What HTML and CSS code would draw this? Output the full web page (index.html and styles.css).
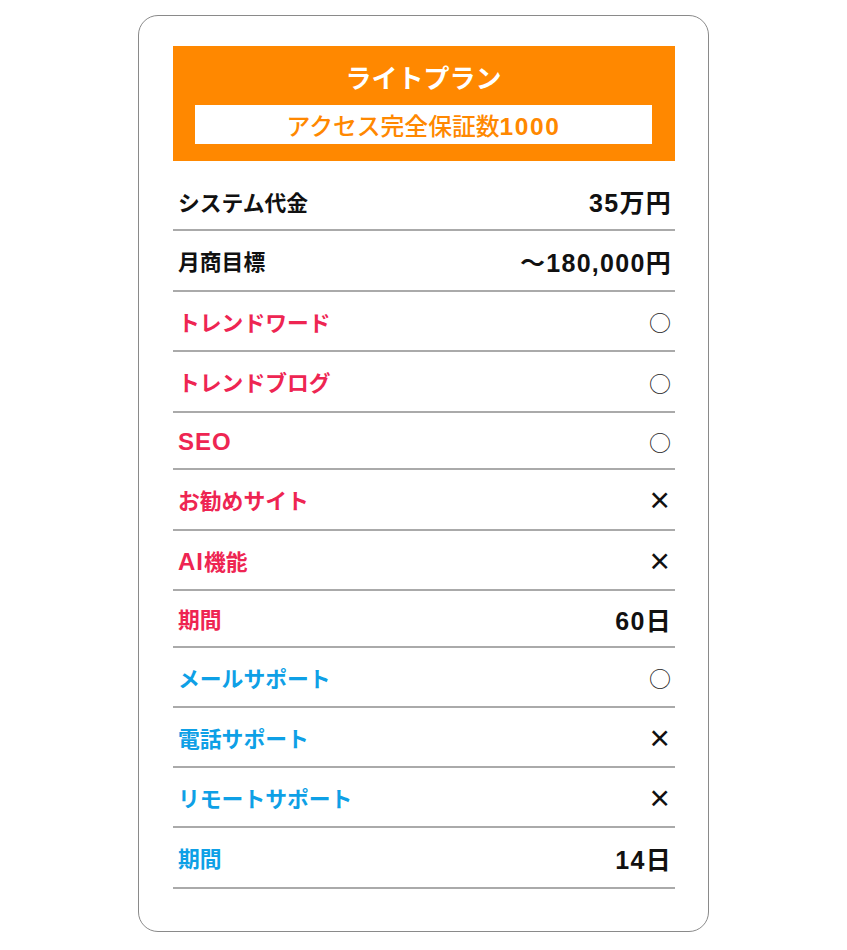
FILE: index.html
```html
<!DOCTYPE html>
<html lang="ja">
<head>
<meta charset="utf-8">
<title>ライトプラン</title>
<link rel="stylesheet" href="styles.css">
</head>
<body>
<div class="card">
  <div class="plan-head">
    <div class="plan-title">ライトプラン</div>
    <div class="plan-sub">アクセス完全保証数<span class="sub-num">1000</span></div>
  </div>
  <div class="rows">
    <div class="row r70 first"><span class="label dark">システム代金</span><span class="value">35万円</span></div>
    <div class="row r61"><span class="label dark">月商目標</span><span class="value">〜180,000円</span></div>
    <div class="row r60"><span class="label red">トレンドワード</span><span class="value mark">○</span></div>
    <div class="row r61"><span class="label red">トレンドブログ</span><span class="value mark">○</span></div>
    <div class="row r57"><span class="label red"><span class="lat">SEO</span></span><span class="value mark">○</span></div>
    <div class="row r61"><span class="label red">お勧めサイト</span><span class="value cross">×</span></div>
    <div class="row r60"><span class="label red"><span class="lat">AI</span>機能</span><span class="value cross">×</span></div>
    <div class="row r57"><span class="label red">期間</span><span class="value">60日</span></div>
    <div class="row r60"><span class="label blue">メールサポート</span><span class="value mark">○</span></div>
    <div class="row r60"><span class="label blue">電話サポート</span><span class="value cross">×</span></div>
    <div class="row r60"><span class="label blue">リモートサポート</span><span class="value cross">×</span></div>
    <div class="row r61"><span class="label blue">期間</span><span class="value">14日</span></div>
  </div>
</div>
</body>
</html>
```

FILE: styles.css
```css
* { box-sizing: border-box; }
html, body { margin: 0; padding: 0; background: #fff; }
body {
  font-family: "Liberation Sans", "Noto Sans CJK JP", sans-serif;
  color: #111;
}
.card {
  margin: 15px 0 0 138px;
  width: 571px;
  height: 917px;
  border: 1px solid #8a8a8a;
  border-radius: 20px;
  padding: 30px 33px 0 34px;
}
.plan-head {
  background: #ff8800;
  height: 115px;
  padding: 12px 23px 0 22px;
  display: flex;
  flex-direction: column;
  align-items: stretch;
}
.plan-title {
  color: #fff;
  font-family: "Noto Sans CJK JP", sans-serif;
  font-weight: 700;
  font-size: 26px;
  line-height: 38px;
  text-align: center;
  height: 47px;
}
.plan-sub {
  background: #fff;
  color: #ff8800;
  font-family: "Noto Sans CJK JP", sans-serif;
  font-weight: 500;
  font-size: 23.8px;
  height: 39px;
  line-height: 39px;
  text-align: center;
}
.sub-num {
  font-family: "Liberation Sans", sans-serif;
  font-weight: 700;
  font-size: 24.5px;
  letter-spacing: 1.6px;
}
.rows { display: flex; flex-direction: column; }
.row {
  display: flex;
  justify-content: space-between;
  align-items: center;
  border-bottom: 2px solid #aaaaaa;
  padding: 0 4px 0 5px;
}
.r70 { height: 70px; }
.r61 { height: 61px; }
.r60 { height: 60px; }
.r57 { height: 57px; }
.first { padding-top: 12px; }
.label {
  font-family: "Noto Sans CJK JP", sans-serif;
  font-size: 21.8px;
  font-weight: 700;
}
.lat {
  font-family: "Liberation Sans", sans-serif;
  font-size: 24px;
  letter-spacing: 1px;
}
.dark { color: #111; }
.red { color: #ee2552; }
.blue { color: #0ea0e6; }
.value {
  font-family: "Liberation Sans", "Noto Sans CJK JP", sans-serif;
  font-size: 25px;
  font-weight: 700;
  letter-spacing: 1.3px;
  color: #111;
  margin-right: -1px;
}
.mark {
  font-family: "Noto Sans CJK JP", sans-serif;
  font-weight: 400;
  font-size: 22px;
  letter-spacing: 0;
  margin-right: 0;
  color: #222;
}
.cross {
  font-family: "Liberation Sans", sans-serif;
  font-weight: 400;
  font-size: 35px;
  line-height: 1;
  letter-spacing: 0;
  margin-right: 1px;
  color: #111;
}
```
